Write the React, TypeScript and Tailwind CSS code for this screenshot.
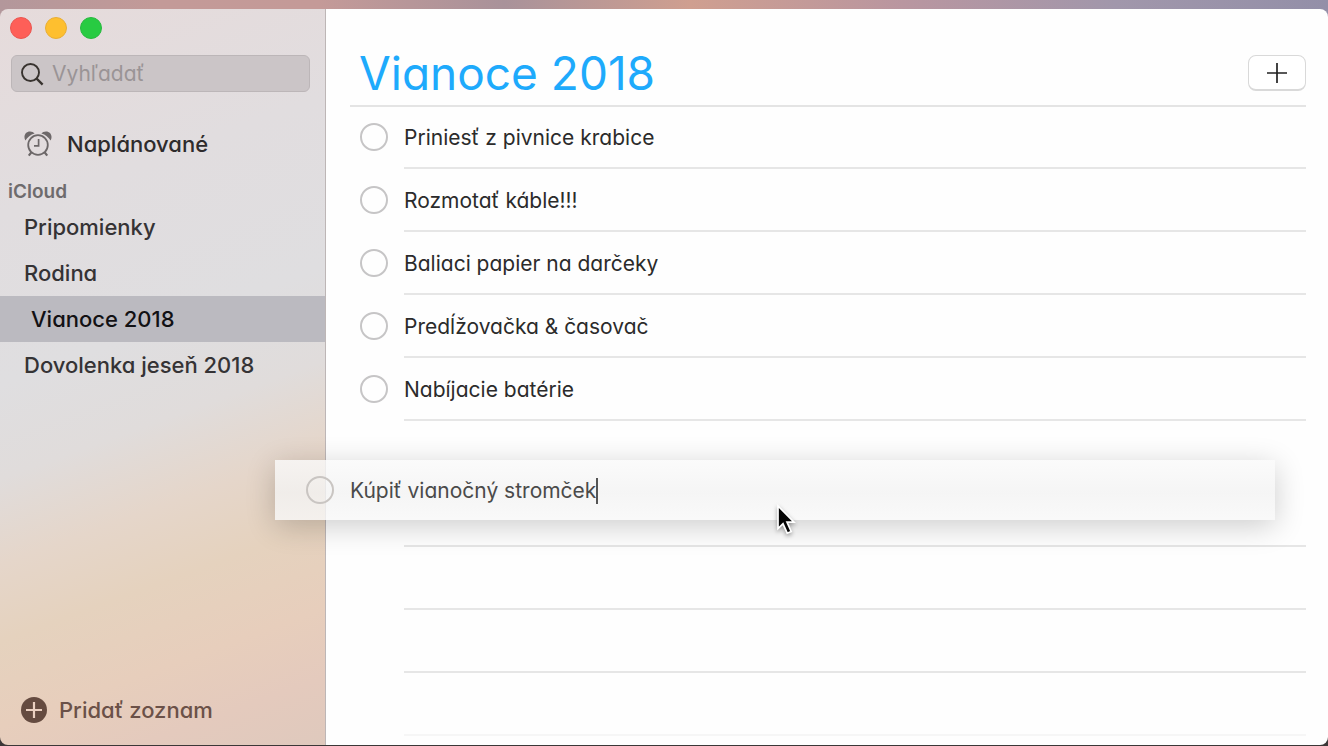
import React, { useState } from 'react';

const lists = ['Pripomienky', 'Rodina', 'Vianoce 2018', 'Dovolenka jeseň 2018'];

const reminders = [
  'Priniesť z pivnice krabice',
  'Rozmotať káble!!!',
  'Baliaci papier na darčeky',
  'Predĺžovačka & časovač',
  'Nabíjacie batérie',
];

const checkbox = 'mb-0.5 size-7 shrink-0 appearance-none rounded-full border-2 border-[#c6c5c6] checked:bg-[#1eaafc]';

function AlarmIcon() {
  return (
    <svg viewBox="0 0 28 26" className="h-[26px] w-7 shrink-0 text-[#6d6869]" fill="none" stroke="currentColor" strokeWidth="1.8" aria-hidden="true">
      <circle cx="14" cy="14" r="9.8" />
      <path d="M14.6 8v6.8H10" strokeWidth="1.7" />
      <path d="M7.4 21.3 4.8 24.6M20.6 21.3l2.6 3.3" strokeWidth="2.2" />
      <path d="M1.4 9.6C-1 5 1.4.4 6 .4c2 0 3.600.8 4.600 2C6.600 3.600 3.400 6 1.400 9.600Z" fill="currentColor" stroke="none" />
      <path d="M26.600 9.600C29 5 26.600.4 22 .4c-2 0-3.600.8-4.600 2 4 1.200 7.200 3.600 9.200 7.200Z" fill="currentColor" stroke="none" />
    </svg>
  );
}

function Sidebar({ active, onSelect }: { active: string; onSelect: (name: string) => void }) {
  return (
    <aside className="flex w-[326px] shrink-0 flex-col border-r border-[#bdb6b6] bg-[linear-gradient(160deg,#e6dbdb_0%,#e1dddf_24%,#dfdee0_44%,#e0dcdb_55%,#e5d6ca_65%,#e5d2be_74%,#e7cebc_84%,#e4cabd_92%,#dfc9bd_100%)] font-[450]">
      <div className="flex gap-[13px] px-2.5 pt-2">
        <button aria-label="Zavrieť" className="size-[22px] rounded-full border border-[#ea5650] bg-[#fe5f58]" />
        <button aria-label="Minimalizovať" className="size-[22px] rounded-full border border-[#e8ae35] bg-[#febf2f]" />
        <button aria-label="Zväčšiť" className="size-[22px] rounded-full border border-[#28b93f] bg-[#28cb42]" />
      </div>
      <label className="mt-4 mr-[15px] ml-[11px] flex h-[37px] items-center gap-2 rounded-md border border-[#bcb6b8] bg-[#cbc5c7] px-2">
        <svg viewBox="0 0 24 24" className="size-6 shrink-0 text-[#38332f]" fill="none" stroke="currentColor" strokeWidth="1.9" aria-hidden="true">
          <circle cx="10.5" cy="10.5" r="8.5" />
          <path d="m16.6 16.6 6 6" strokeWidth="2.3" />
        </svg>
        <input type="search" aria-label="Vyhľadať" placeholder="Vyhľadať" className="w-full min-w-0 bg-transparent text-[21px] leading-7 font-normal outline-none placeholder:text-[#9a9496]" />
      </label>
      <a href="#scheduled" className="mt-[29px] flex h-[46px] items-center gap-[15px] pl-6 text-[22px] text-[#2e2b2c]">
        <AlarmIcon />
        Naplánované
      </a>
      <h2 className="mt-2.5 flex h-7 items-center pt-0.5 pl-2 text-[19px] font-semibold text-[#6e6b6d]">iCloud</h2>
      <nav className="-mt-px flex flex-col">
        {lists.map((name) => (
          <button
            key={name}
            onClick={() => onSelect(name)}
            className={`h-[46px] pt-px pr-4 text-left text-[22px] ${name === active ? 'bg-[#bbbac0] pl-[31px] text-[#121114]' : 'pl-6 text-[#353335]'}`}
          >
            {name}
          </button>
        ))}
      </nav>
      <button className="mt-auto mb-3 flex h-[46px] items-center gap-3 pl-[21px] text-[22px] text-[#6b5148]">
        <svg viewBox="0 0 26 26" className="size-[26px] shrink-0" aria-hidden="true">
          <circle cx="13" cy="13" r="13" fill="#654b40" />
          <path d="M13 5v16M5 13h16" stroke="#ebd0c1" strokeWidth="2.2" />
        </svg>
        Pridať zoznam
      </button>
    </aside>
  );
}

function DraggedReminder() {
  return (
    <div className="absolute top-[39px] right-[31px] -left-[75px] flex h-[60px] items-center gap-4 bg-[linear-gradient(#fafafacc,#f3f3f3cc_55%,#f8f8f8cc)] pl-[31px] shadow-[0_6px_30px_rgba(0,0,0,0.2)]">
      <input type="checkbox" id="dragged" aria-label="Kúpiť vianočný stromček" className="size-7 shrink-0 appearance-none rounded-full border-2 border-[#c9c5c2]" />
      <div className="flex items-center pt-0.5">
        <input aria-label="Názov" defaultValue="Kúpiť vianočný stromček" className="field-sizing-content bg-transparent text-[21px] text-[#4a4a4a] outline-none" />
        <span className="h-[26px] w-0.5 bg-[#555]" />
      </div>
      <svg viewBox="0 0 20 32" className="absolute top-11 left-[501px] h-8 w-5 drop-shadow-[0_2px_2px_rgba(0,0,0,0.35)]" aria-hidden="true">
        <path d="M2 2v22.5l5-4.700 4.200 9.400 4-1.700-4.200-9.300h7Z" fill="#050505" stroke="#fff" strokeWidth="1.7" />
      </svg>
    </div>
  );
}

export default function App() {
  const [active, setActive] = useState('Vianoce 2018');

  return (
    <div className="flex min-h-screen flex-col bg-[#3b3737] bg-[linear-gradient(90deg,#b3979b_0%,#c39a98_12%,#c49a98_24%,#a9929a_38%,#cf9f90_52%,#b996a0_68%,#a197ab_84%,#938fa8_100%)] bg-[length:100%_40px] bg-no-repeat pt-[9px] pb-px font-['Inter','Liberation_Sans',sans-serif] [font-feature-settings:'cv11']">
      <div className="flex flex-1 overflow-hidden rounded-lg">
        <Sidebar active={active} onSelect={setActive} />
        <main className="relative min-w-0 flex-1 bg-[#fefefe] pr-[22px] pl-6">
          <header className="flex h-[98px] items-end justify-between border-b-2 border-[#e4e4e4] pl-[9px]">
            <h1 className="pb-1 text-[46px] leading-[56px] text-[#1eaafc]">{active}</h1>
            <button aria-label="Pridať pripomienku" className="mb-3.5 flex h-9 w-[58px] items-center justify-center rounded-lg border border-b-2 border-[#d9d9d9] bg-white">
              <svg viewBox="0 0 20 20" className="size-5" stroke="#222" strokeWidth="1.7" aria-hidden="true">
                <path d="M10 0v20M0 10h20" />
              </svg>
            </button>
          </header>
          <ul className="-mt-px">
            {reminders.map((text, i) => (
              <li key={text} className="flex h-[63px] items-center gap-4 pl-2.5">
                <input type="checkbox" id={`reminder-${i}`} className={checkbox} />
                <label htmlFor={`reminder-${i}`} className="flex h-full flex-1 items-center border-b-2 border-[#e6e6e6] pt-0.5 text-[21px] text-[#2b2b2b]">
                  {text}
                </label>
              </li>
            ))}
            <li className="relative h-[126px] pl-[54px]">
              <div className="h-full border-b-2 border-[#e6e6e6]" />
              <DraggedReminder />
            </li>
            <li className="ml-[54px] h-[63px] border-b-2 border-[#e6e6e6]" />
            <li className="ml-[54px] h-[63px] border-b-2 border-[#e6e6e6]" />
            <li className="ml-[54px] h-[63px] border-b-2 border-[#f6f6f6]" />
          </ul>
        </main>
      </div>
    </div>
  );
}
